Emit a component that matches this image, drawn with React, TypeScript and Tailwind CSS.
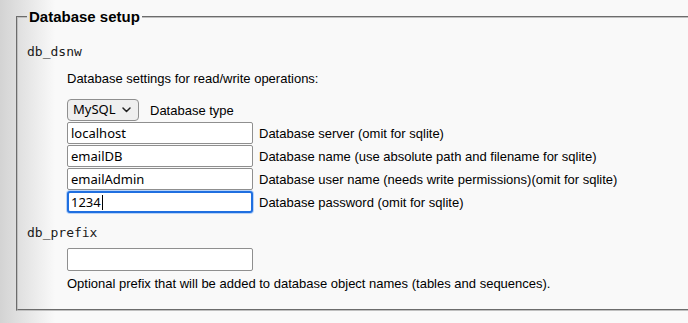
import React from "react";

const sans = { fontFamily: '"Liberation Sans", Arial, sans-serif' };

function Field({ value, focused }: { value: string; focused?: boolean }) {
  if (focused) {
    return (
      <div className="h-[22px] w-[186px] rounded-[3px] border-2 border-[#1f6fe0] bg-white pl-[2px] text-[13px] leading-[18px] text-black shadow-[0_0_0_1px_#b9d3f7] flex items-center font-['Noto_Sans',sans-serif]">
        <span>{value}</span>
        <span className="ml-[1px] inline-block h-[15px] w-[1px] bg-black" />
      </div>
    );
  }
  return (
    <div className="h-[22px] w-[186px] rounded-[2px] border border-[#8f8f8f] bg-white pl-[3px] text-[13px] leading-[20px] text-black font-['Noto_Sans',sans-serif]">
      {value}
    </div>
  );
}

function Row({ value, label, focused }: { value: string; label: string; focused?: boolean }) {
  return (
    <div className="flex items-center">
      <Field value={value} focused={focused} />
      <span className="ml-[6px] text-[13px] leading-[15px] text-black" style={sans}>
        {label}
      </span>
    </div>
  );
}

export default function App() {
  return (
    <div className="h-[323px] w-[688px] overflow-hidden bg-[linear-gradient(to_right,#d3d3d3,#f9f9f9_55px)]">
      <div className="pl-[16px] pt-[8px]">
        <fieldset className="w-[700px] border-2 border-[#c0c0c0] [border-style:groove] pl-[9px] pr-[9px] pb-[18px] pt-0 m-0">
          <legend
            className="px-[2px] text-[15px] font-bold leading-[18px] text-black"
            style={sans}
          >
            Database setup
          </legend>

          <div className="mt-[18px] h-[16px] text-[13px] leading-[16px] text-[#1a1a1a] font-['DejaVu_Sans_Mono',monospace]">
            db_dsnw
          </div>

          <div className="pl-[40px]">
            <div className="mt-[11px] text-[13px] leading-[15px] text-black" style={sans}>
              Database settings for read/write operations:
            </div>

            <div className="mt-[13px] flex items-center">
              <div className="flex h-[22px] w-[72px] items-center justify-between rounded-[4px] border border-[#8f8f8f] bg-[#efefef] pl-[5px] pr-[7px] text-[13px] text-black font-['Noto_Sans',sans-serif]">
                <span>MySQL</span>
                <svg width="9" height="6" viewBox="0 0 9 6" fill="none">
                  <path d="M1 1l3.5 3.5L8 1" stroke="#222" strokeWidth="1.5" strokeLinecap="round" strokeLinejoin="round" />
                </svg>
              </div>
              <span className="ml-[11px] text-[13px] leading-[15px] text-black" style={sans}>
                Database type
              </span>
            </div>

            <div className="mt-[1px] flex flex-col gap-[1px]">
              <Row value="localhost" label="Database server (omit for sqlite)" />
              <Row value="emailDB" label="Database name (use absolute path and filename for sqlite)" />
              <Row value="emailAdmin" label="Database user name (needs write permissions)(omit for sqlite)" />
              <Row value="1234" label="Database password (omit for sqlite)" focused />
            </div>
          </div>

          <div className="mt-[12px] h-[16px] text-[13px] leading-[16px] text-[#1a1a1a] font-['DejaVu_Sans_Mono',monospace]">
            db_prefix
          </div>

          <div className="pl-[40px]">
            <div className="mt-[7px] h-[23px] w-[186px] rounded-[2px] border border-[#8f8f8f] bg-white" />
            <div className="mt-[5px] text-[13px] leading-[15px] text-black" style={sans}>
              Optional prefix that will be added to database object names (tables and sequences).
            </div>
          </div>
        </fieldset>
      </div>
    </div>
  );
}
